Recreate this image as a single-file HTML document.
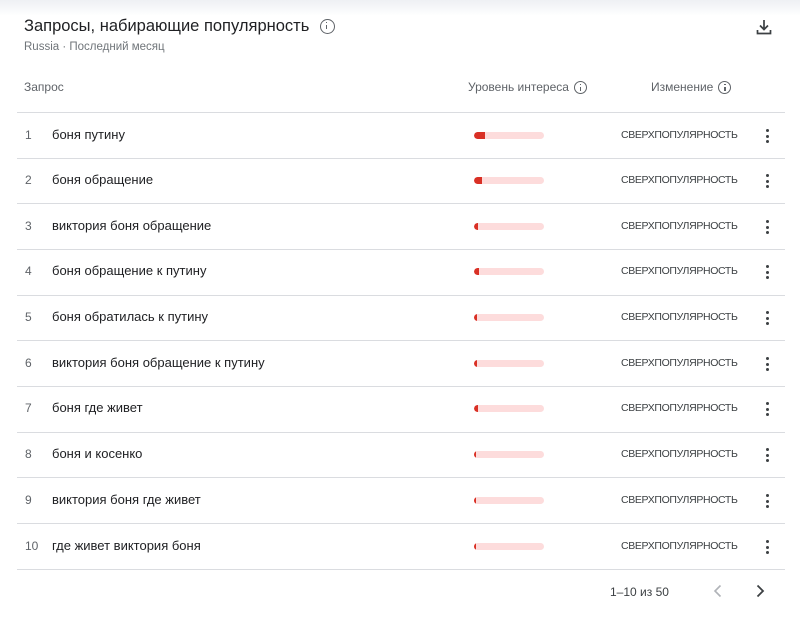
<!DOCTYPE html>
<html><head><meta charset="utf-8"><style>
body{margin:0;width:800px;height:617px;background:#fff;font-family:"Liberation Sans",sans-serif;position:relative;overflow:hidden;color:#202124}
.top{position:absolute;left:0;top:0;width:800px;height:16px;background:linear-gradient(#eef0f4,#fff)}
.t{position:absolute;left:24px;top:17px;font-size:16.5px;color:#202124}
.s{position:absolute;left:24px;top:41px;font-size:11.5px;color:#70757a}
.h{position:absolute;top:80px;font-size:12px;color:#5f6368}
.info{display:inline-block;width:11px;height:11px;border:1.3px solid #5f6368;border-radius:50%;vertical-align:-3px;margin-left:5px;position:relative}
.info:after{content:"";position:absolute;left:5px;top:4.5px;width:1.3px;height:4px;background:#5f6368}
.info:before{content:"";position:absolute;left:5px;top:2px;width:1.3px;height:1.3px;background:#5f6368}
.line{position:absolute;left:17px;width:768px;height:1px;background:#dadce0}
.row{position:absolute;left:0;width:800px;height:45px}
.n{position:absolute;left:25px;top:15px;font-size:12px;color:#5f6368}
.q{position:absolute;left:52px;top:14px;font-size:13px;color:#202124}
.bar{position:absolute;left:474px;top:19px;width:70px;height:7px;background:#fddcdc;border-radius:4px;overflow:hidden}
.bar i{display:block;height:7px;background:#d93025;border-radius:4px 0 0 4px}
.c{position:absolute;left:621px;top:16px;font-size:10.5px;color:#3c4043;letter-spacing:-0.35px}
.d{position:absolute;left:766px;top:16px;width:3px}
.d b{display:block;width:3px;height:3px;background:#3c4043;border-radius:50%;margin-bottom:2.5px}
</style></head><body>
<div class="top"></div>
<div class="t">Запросы, набирающие популярность <span class="info" style="width:13px;height:13px;margin-left:6px"></span></div>
<div class="s">Russia · Последний месяц</div>
<svg style="position:absolute;left:755px;top:18px" width="18" height="18" viewBox="0 0 18 18"><path d="M9 2v9M5 7.5l4 4 4-4M2.5 12v3.5h13V12" fill="none" stroke="#3c4043" stroke-width="1.7"/></svg>
<div class="h" style="left:24px">Запрос</div>
<div class="h" style="left:468px">Уровень интереса<span class="info"></span></div>
<div class="h" style="left:651px">Изменение<span class="info"></span></div>
<div class="line" style="top:112px"></div>
<div class="row" style="top:113px"><div class="n">1</div><div class="q">боня путину</div><div class="bar"><i style="width:11px"></i></div><div class="c">СВЕРХПОПУЛЯРНОСТЬ</div><div class="d"><b></b><b></b><b></b></div></div>
<div class="line" style="top:158px"></div>
<div class="row" style="top:158px"><div class="n">2</div><div class="q">боня обращение</div><div class="bar"><i style="width:8px"></i></div><div class="c">СВЕРХПОПУЛЯРНОСТЬ</div><div class="d"><b></b><b></b><b></b></div></div>
<div class="line" style="top:203px"></div>
<div class="row" style="top:204px"><div class="n">3</div><div class="q">виктория боня обращение</div><div class="bar"><i style="width:4px"></i></div><div class="c">СВЕРХПОПУЛЯРНОСТЬ</div><div class="d"><b></b><b></b><b></b></div></div>
<div class="line" style="top:249px"></div>
<div class="row" style="top:249px"><div class="n">4</div><div class="q">боня обращение к путину</div><div class="bar"><i style="width:5px"></i></div><div class="c">СВЕРХПОПУЛЯРНОСТЬ</div><div class="d"><b></b><b></b><b></b></div></div>
<div class="line" style="top:295px"></div>
<div class="row" style="top:295px"><div class="n">5</div><div class="q">боня обратилась к путину</div><div class="bar"><i style="width:3px"></i></div><div class="c">СВЕРХПОПУЛЯРНОСТЬ</div><div class="d"><b></b><b></b><b></b></div></div>
<div class="line" style="top:340px"></div>
<div class="row" style="top:341px"><div class="n">6</div><div class="q">виктория боня обращение к путину</div><div class="bar"><i style="width:3px"></i></div><div class="c">СВЕРХПОПУЛЯРНОСТЬ</div><div class="d"><b></b><b></b><b></b></div></div>
<div class="line" style="top:386px"></div>
<div class="row" style="top:386px"><div class="n">7</div><div class="q">боня где живет</div><div class="bar"><i style="width:4px"></i></div><div class="c">СВЕРХПОПУЛЯРНОСТЬ</div><div class="d"><b></b><b></b><b></b></div></div>
<div class="line" style="top:432px"></div>
<div class="row" style="top:432px"><div class="n">8</div><div class="q">боня и косенко</div><div class="bar"><i style="width:2px"></i></div><div class="c">СВЕРХПОПУЛЯРНОСТЬ</div><div class="d"><b></b><b></b><b></b></div></div>
<div class="line" style="top:477px"></div>
<div class="row" style="top:478px"><div class="n">9</div><div class="q">виктория боня где живет</div><div class="bar"><i style="width:2px"></i></div><div class="c">СВЕРХПОПУЛЯРНОСТЬ</div><div class="d"><b></b><b></b><b></b></div></div>
<div class="line" style="top:523px"></div>
<div class="row" style="top:524px"><div class="n">10</div><div class="q">где живет виктория боня</div><div class="bar"><i style="width:2px"></i></div><div class="c">СВЕРХПОПУЛЯРНОСТЬ</div><div class="d"><b></b><b></b><b></b></div></div>
<div class="line" style="top:569px"></div>
<div style="position:absolute;left:610px;top:585px;font-size:12px;color:#3c4043">1–10 из 50</div>
<svg style="position:absolute;left:710px;top:583px" width="16" height="16" viewBox="0 0 16 16"><path d="M10.5 2.5L5 8l5.5 5.5" fill="none" stroke="#b0b3b8" stroke-width="1.6"/></svg>
<svg style="position:absolute;left:752px;top:583px" width="16" height="16" viewBox="0 0 16 16"><path d="M5.5 2.5L11 8l-5.5 5.5" fill="none" stroke="#3c4043" stroke-width="1.8"/></svg>
</body></html>
